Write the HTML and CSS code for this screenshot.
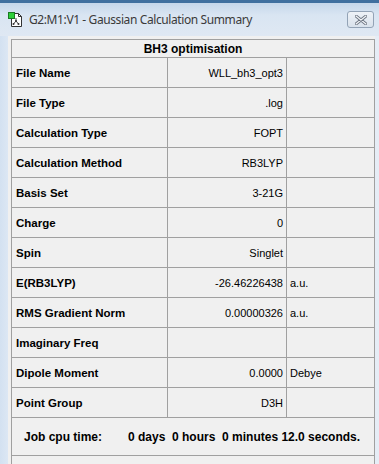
FILE: index.html
```html
<!DOCTYPE html>
<html>
  <head>
    <link rel="stylesheet" href="styles.css">
  </head>
  <body>
    <div class="window">
      <div class="titlebar">
        <svg class="app-icon" width="15" height="15" viewBox="0 0 15 15">
          <path d="M3.5 1.5h7l3 3v10h-10z" fill="#fff" stroke="#333" />
          <path d="M10.5 1.5v3h3" fill="none" stroke="#333" />
          <rect x="0.5" y="0.5" width="6" height="6" fill="#2fcf3a" stroke="#1a7a22" />
          <path d="M8 6v3M8 9l-2.5 3M8 9l2.5 3" stroke="#444" fill="none" />
          <circle cx="8" cy="9" r="1" fill="#333" />
          <circle cx="5.5" cy="12" r="1" fill="#333" />
          <circle cx="10.5" cy="12" r="1" fill="#333" />
        </svg>
        <span class="title">G2:M1:V1 - Gaussian Calculation Summary</span>
        <div class="close-btn">
          <svg width="12" height="10" viewBox="0 0 12 10">
            <path d="M1 1L11 9M11 1L1 9" stroke="#6b7480" stroke-width="3" stroke-linecap="round" />
            <path d="M1 1L11 9M11 1L1 9" stroke="#f4f6f9" stroke-width="1.2" stroke-linecap="round" />
          </svg>
        </div>
      </div>
      <div class="client">
        <table class="summary">
          <colgroup>
            <col class="col-label">
            <col class="col-value">
            <col class="col-unit">
          </colgroup>
          <tr class="head-row"><th colspan="3">BH3 optimisation</th></tr>
          <tr><td class="label">File Name</td><td class="value">WLL_bh3_opt3</td><td class="unit"></td></tr>
          <tr><td class="label">File Type</td><td class="value">.log</td><td class="unit"></td></tr>
          <tr><td class="label">Calculation Type</td><td class="value">FOPT</td><td class="unit"></td></tr>
          <tr><td class="label">Calculation Method</td><td class="value">RB3LYP</td><td class="unit"></td></tr>
          <tr><td class="label">Basis Set</td><td class="value">3-21G</td><td class="unit"></td></tr>
          <tr><td class="label">Charge</td><td class="value">0</td><td class="unit"></td></tr>
          <tr><td class="label">Spin</td><td class="value">Singlet</td><td class="unit"></td></tr>
          <tr><td class="label">E(RB3LYP)</td><td class="value">-26.46226438</td><td class="unit">a.u.</td></tr>
          <tr><td class="label">RMS Gradient Norm</td><td class="value">0.00000326</td><td class="unit">a.u.</td></tr>
          <tr><td class="label">Imaginary Freq</td><td class="value"></td><td class="unit"></td></tr>
          <tr><td class="label">Dipole Moment</td><td class="value">0.0000</td><td class="unit">Debye</td></tr>
          <tr><td class="label">Point Group</td><td class="value">D3H</td><td class="unit"></td></tr>
          <tr class="cpu-row">
            <td colspan="3"><span class="cpu-label">Job cpu time:</span><span class="cpu-value">0 days  0 hours  0 minutes 12.0 seconds.</span></td>
          </tr>
          <tr class="tail-row"><td colspan="3"></td></tr>
        </table>
      </div>
    </div>
  </body>
</html>
```

FILE: styles.css
```css
html,
body {
  margin: 0;
  padding: 0;
}

body {
  width: 379px;
  height: 464px;
  overflow: hidden;
  font-family: "Liberation Sans", Arial, sans-serif;
}

.window {
  display: flex;
  flex-direction: column;
  width: 379px;
  height: 464px;
  box-sizing: border-box;
  border-top: 3px solid #3f6f9f;
  background: linear-gradient(to right, #d3e1f1 0, #dce7f4 8px, #e6edf6 100%);
}

.titlebar {
  display: flex;
  align-items: center;
  height: 33px;
  padding: 0 5px 4px 8px;
  box-sizing: border-box;
  background: linear-gradient(to bottom, #c4d6ea 0, #d9e5f2 12px, #dfe8f3 100%);
}

.app-icon {
  flex: none;
  margin-top: 4px;
}

.title {
  flex: 1;
  margin-left: 6px;
  margin-top: 4px;
  font-family: "Noto Sans", "Open Sans", sans-serif;
  font-size: 12px;
  letter-spacing: -0.4px;
  color: #3a3a3a;
  white-space: nowrap;
}

.close-btn {
  display: flex;
  align-items: center;
  justify-content: center;
  width: 27px;
  height: 17px;
  margin-top: 4px;
  box-sizing: border-box;
  border: 1px solid #93a3b6;
  border-radius: 3px;
  background: linear-gradient(to bottom, #eef2f7, #d9e2ec);
}

.client {
  flex: 1;
  margin: 0 4px 0 8px;
  padding: 3px 1px 0 3px;
  background: #f0f0f0;
  overflow: hidden;
}

.summary {
  border-collapse: collapse;
  table-layout: fixed;
  width: 363px;
  font-size: 11px;
  color: #000;
}

.col-label {
  width: 156px;
}

.col-value {
  width: 119px;
}

.col-unit {
  width: 88px;
}

.summary th,
.summary td {
  border: 1px solid #a0a0a0;
  padding: 0;
  white-space: nowrap;
}

.summary th {
  height: 17px;
  font-size: 12px;
  font-weight: bold;
  text-align: center;
}

.summary td {
  height: 29px;
}

.summary .label {
  padding-left: 4px;
  font-weight: bold;
  font-size: 11.5px;
}

.summary .value {
  padding-right: 3px;
  text-align: right;
}

.summary .unit {
  padding-left: 3px;
}

.cpu-row td {
  height: 37px;
  padding-left: 12px;
  font-weight: bold;
  font-size: 12px;
}

.cpu-label {
  display: inline-block;
  width: 104px;
}

.cpu-value {
  white-space: pre;
}

.tail-row td {
  height: 20px;
}
```
